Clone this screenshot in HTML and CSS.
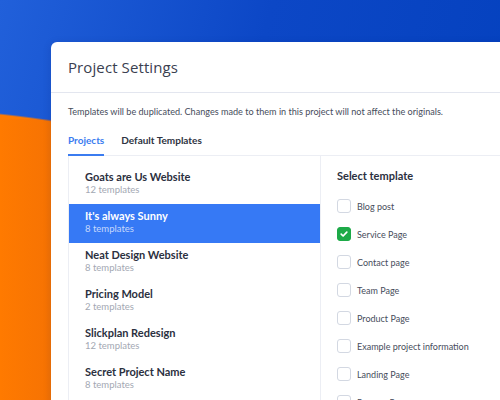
FILE: index.html
```html
<!DOCTYPE html>
<html>
<head>
<meta charset="utf-8">
<link rel="stylesheet" href="styles.css">
</head>
<body>
<div class="card">
  <div class="card-header"><h1 class="title">Project Settings</h1></div>
  <p class="desc">Templates will be duplicated. Changes made to them in this project will not affect the originals.</p>
  <div class="tabs">
    <span class="tab active">Projects</span>
    <span class="tab">Default Templates</span>
  </div>
  <div class="panel">
    <ul class="projects">
      <li class="project"><span class="p-name">Goats are Us Website</span><span class="p-count">12 templates</span></li>
      <li class="project selected"><span class="p-name">It's always Sunny</span><span class="p-count">8 templates</span></li>
      <li class="project"><span class="p-name">Neat Design Website</span><span class="p-count">8 templates</span></li>
      <li class="project"><span class="p-name">Pricing Model</span><span class="p-count">2 templates</span></li>
      <li class="project"><span class="p-name">Slickplan Redesign</span><span class="p-count">12 templates</span></li>
      <li class="project"><span class="p-name">Secret Project Name</span><span class="p-count">8 templates</span></li>
    </ul>
    <div class="templates">
      <h2 class="t-head">Select template</h2>
      <ul class="t-list">
        <li class="t-item"><span class="box"></span>Blog post</li>
        <li class="t-item"><span class="box checked"><svg viewBox="0 0 14 14" width="14" height="14"><path d="M4.2 7.2 L6.1 9 L9.8 5.2" fill="none" stroke="#fff" stroke-width="1.7" stroke-linecap="round" stroke-linejoin="round"/></svg></span>Service Page</li>
        <li class="t-item"><span class="box"></span>Contact page</li>
        <li class="t-item"><span class="box"></span>Team Page</li>
        <li class="t-item"><span class="box"></span>Product Page</li>
        <li class="t-item"><span class="box"></span>Example project information</li>
        <li class="t-item"><span class="box"></span>Landing Page</li>
        <li class="t-item"><span class="box"></span>Process Page</li>
      </ul>
    </div>
  </div>
</div>
</body>
</html>
```
FILE: styles.css
```css
html, body {
  margin: 0;
  height: 100%;
  overflow: hidden;
}
body {
  font-family: "Lato", "Open Sans", sans-serif;
  padding: 42px 0 0 51px;
  box-sizing: border-box;
  background:
    linear-gradient(90deg, rgba(190, 70, 20, 0) 0, rgba(190, 70, 20, 0.14) 51px) 0 119px / 51px 300px no-repeat,
    radial-gradient(ellipse 700px 500px at -100px 608px, #ff7a00 99.6%, rgba(255, 122, 0, 0) 100%),
    linear-gradient(105deg, #2160da 0%, #0c47c6 45%, #0340bd 100%);
}
.card {
  width: 520px;
  height: 420px;
  background: #fff;
  border-radius: 6px 0 0 0;
  box-shadow: 0 2px 8px rgba(0, 20, 80, 0.15);
}
.card-header {
  height: 50px;
  border-bottom: 1px solid #e3e6ef;
  display: flex;
  align-items: center;
  padding-left: 17px;
}
.title {
  margin: 0;
  font-family: "Open Sans", sans-serif;
  font-weight: 400;
  font-size: 15px;
  color: #3a4050;
  letter-spacing: 0.1px;
}
.desc {
  margin: 0;
  padding: 13px 0 0 17px;
  font-size: 9.1px;
  line-height: 12px;
  color: #474d5c;
}
.tabs {
  display: flex;
  gap: 17px;
  padding: 16px 0 0 17px;
}
.tab {
  font-size: 10px;
  font-weight: 700;
  color: #2e3342;
  line-height: 12px;
  padding-bottom: 8px;
  border-bottom: 2px solid transparent;
}
.tab.active {
  color: #3b7cf0;
  border-bottom-color: #3b7cf0;
}
.panel {
  margin-left: 17px;
  border-top: 1px solid #eceef4;
  border-left: 1px solid #eceef4;
  display: flex;
  margin-top: -1px;
}
.projects {
  list-style: none;
  margin: 0;
  padding: 9px 0 0;
  width: 251px;
  border-right: 1px solid #eceef4;
}
.project {
  height: 39px;
  box-sizing: border-box;
  display: flex;
  flex-direction: column;
  justify-content: center;
  padding: 0 0 3px 16px;
}
.selected {
  background: #3679f5;
}
.p-name {
  font-size: 11px;
  font-weight: 700;
  color: #2b3040;
  line-height: 13px;
}
.p-count {
  font-size: 9.5px;
  color: #a3a8b3;
  line-height: 12px;
  margin-top: 1px;
}
.selected .p-name { color: #fff; }
.selected .p-count { color: #c6d8fc; }
.templates {
  padding: 13px 0 0 16px;
}
.t-head {
  margin: 0;
  font-size: 11px;
  font-weight: 700;
  color: #2b3040;
  line-height: 13px;
}
.t-list {
  list-style: none;
  margin: 0;
  padding: 10px 0 0;
}
.t-item {
  height: 28px;
  display: flex;
  align-items: center;
  gap: 6px;
  font-size: 9px;
  color: #474d5c;
}
.box {
  width: 14px;
  height: 14px;
  box-sizing: border-box;
  border: 1px solid #d3d8e2;
  border-radius: 3px;
  display: flex;
}
.box.checked {
  background: #1daa48;
  border-color: #1daa48;
}
.box svg {
  margin: -1px;
}
```
